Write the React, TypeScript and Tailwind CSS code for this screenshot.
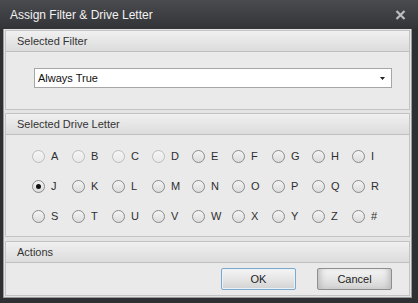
import { useState } from 'react';

const letters = ['A', 'B', 'C', 'D', 'E', 'F', 'G', 'H', 'I', 'J', 'K', 'L', 'M', 'N', 'O', 'P', 'Q', 'R', 'S', 'T', 'U', 'V', 'W', 'X', 'Y', 'Z', '#'];
const disabled = ['A', 'B', 'C', 'D'];

function Radio({ letter, checked, off, onPick }: { letter: string; checked: boolean; off: boolean; onPick: () => void }) {
  return (
    <div onClick={() => !off && onPick()} className="flex items-center h-[13px] w-[40px] cursor-default">
      <span
        className={`w-[13px] h-[13px] rounded-full border flex items-center justify-center ${
          off ? 'border-[#bdbdbd] bg-gradient-to-b from-[#f6f6f6] to-[#e8e8e8]' : 'border-[#8b8b8b] bg-gradient-to-b from-[#f4f4f4] to-[#dcdcdc]'
        }`}
      >
        {checked && <span className="w-[5px] h-[5px] rounded-full bg-[#111]" />}
      </span>
      <span className="ml-[6px] text-[11px] leading-none text-[#2e2e2e]">{letter}</span>
    </div>
  );
}

function Group({ title, className, children }: { title: string; className?: string; children: React.ReactNode }) {
  return (
    <div className={`flex flex-col border border-[#c3c3c3] bg-[#eaeaea] ${className || ''}`}>
      <div className="h-[21px] shrink-0 flex items-center pl-[11px] bg-gradient-to-b from-[#f0f0f0] to-[#dcdcdc] border-b border-[#bfbfbf] text-[11px] text-[#333]">
        {title}
      </div>
      <div className="flex-1">{children}</div>
    </div>
  );
}

export default function App() {
  const [drive, setDrive] = useState('J');

  return (
    <div
      className="w-[418px] h-[303px] bg-[#2f3033] flex flex-col overflow-hidden"
      style={{ fontFamily: '"Liberation Sans", Arial, sans-serif' }}
    >
      {/* Title bar */}
      <div className="h-[29px] shrink-0 flex items-center justify-between pl-[10px] pr-[12px] bg-gradient-to-b from-[#4a4b4f] to-[#333438]">
        <span className="text-[12px] text-[#f2f2f2]">Assign Filter &amp; Drive Letter</span>
        <svg width="11" height="10" viewBox="0 0 11 10">
          <path d="M1.5 1 L9.5 9 M9.5 1 L1.5 9" stroke="#bdbdbd" strokeWidth="2.2" />
        </svg>
      </div>

      {/* Body */}
      <div className="flex-1 ml-[3px] mr-[6px] mb-[5px] bg-[#e4e4e4] border-l border-r border-b border-[#9a9a9a] p-[1px] flex flex-col gap-[2px]">
        <Group title="Selected Filter" className="h-[80px]">
          <div className="pt-[16px] pl-[28px] pr-[17px]">
            <div className="h-[20px] bg-white border border-[#a6a6a6] flex items-center justify-between pl-[3px] pr-[6px]">
              <span className="text-[11px] text-[#111]">Always True</span>
              <svg width="5" height="3" viewBox="0 0 5 3">
                <path d="M0 0 H5 L2.5 3 Z" fill="#222" />
              </svg>
            </div>
          </div>
        </Group>

        <Group title="Selected Drive Letter" className="h-[124px] mt-[1px]">
          <div className="pt-[15px] pl-[26px] grid grid-cols-[repeat(9,40px)] gap-y-[17px]">
            {letters.map((l) => (
              <Radio key={l} letter={l} checked={drive === l} off={disabled.includes(l)} onPick={() => setDrive(l)} />
            ))}
          </div>
        </Group>

        <Group title="Actions" className="flex-1 mt-[2px]">
          <div className="flex justify-end gap-[21px] pt-[5px] pr-[17px]">
            <button className="w-[75px] h-[22px] rounded-[2px] border border-[#7fa7c9] bg-gradient-to-b from-[#f4f4f4] via-[#e6e6e6] to-[#d2d2d2] text-[11px] text-[#222] shadow-[inset_0_0_0_1px_#e8f2fb]">
              OK
            </button>
            <button className="w-[75px] h-[22px] rounded-[2px] border border-[#8e8e8e] bg-gradient-to-b from-[#f4f4f4] via-[#e6e6e6] to-[#d2d2d2] text-[11px] text-[#222] shadow-[inset_6px_0_6px_-4px_#b8b8b8,inset_-6px_0_6px_-4px_#b8b8b8]">
              Cancel
            </button>
          </div>
        </Group>
      </div>
    </div>
  );
}
